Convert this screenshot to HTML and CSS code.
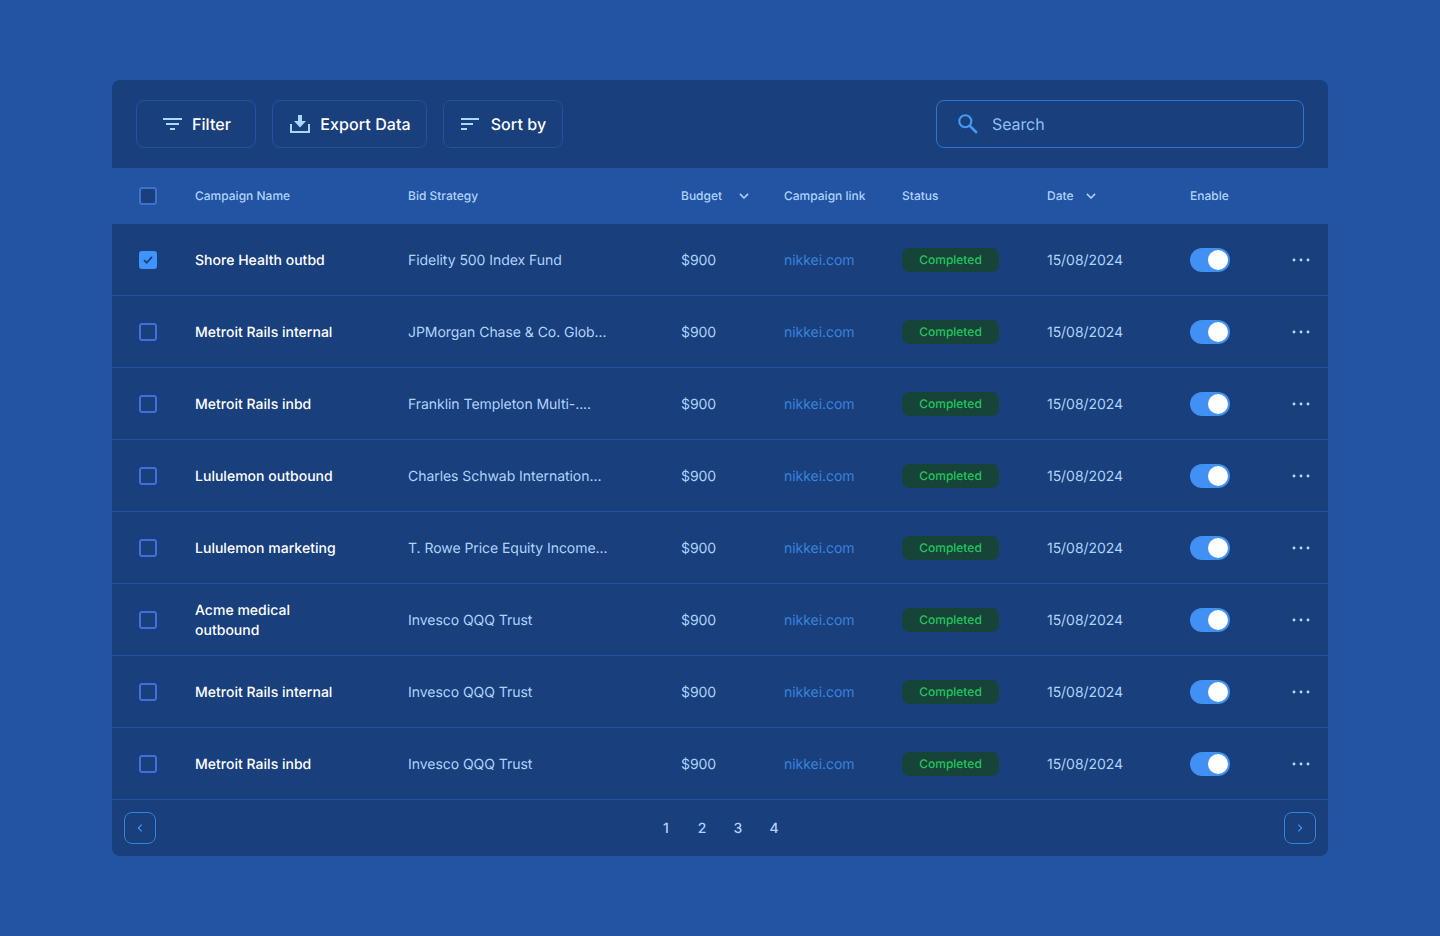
FILE: index.html
```html
<!DOCTYPE html>
<html lang="en">
<head>
<meta charset="utf-8">
<title>Campaigns</title>
<link rel="stylesheet" href="styles.css">
</head>
<body>
<svg class="sprite" width="0" height="0" aria-hidden="true">
  <symbol id="dots" viewBox="0 0 18 4"><circle cx="2" cy="2" r="1.45"/><circle cx="9" cy="2" r="1.45"/><circle cx="16" cy="2" r="1.45"/></symbol>
  <symbol id="down" viewBox="0 0 10 6"><path d="M.9.9 5 5 9.1.9" fill="none" stroke="currentColor" stroke-width="1.5"/></symbol>
</svg>
<main class="card">
  <div class="toolbar">
    <button class="btn btn-filter"><svg width="19" height="14" viewBox="0 0 19 14" fill="currentColor"><path d="M0 1h19v2H0zM3 6h13v2H3zM7 11h5v2H7z"/></svg>Filter</button>
    <button class="btn btn-export"><svg width="20" height="20" viewBox="0 0 20 20" fill="currentColor"><path d="M8 1h4v6h4l-6 6.500L4 7h4z"/><path d="M0 10h2v7h16v-7h2v9H0z"/></svg>Export Data</button>
    <button class="btn btn-sort"><svg width="18" height="14" viewBox="0 0 18 14" fill="currentColor"><path d="M0 1h18v2H0zM0 6h12v2H0zM0 11h6v2H0z"/></svg>Sort by</button>
    <label class="search"><svg width="20" height="20" viewBox="0 0 20 20" fill="none" stroke="currentColor" stroke-width="2.100"><circle cx="7.300" cy="7.300" r="6"/><path d="m11.600 11.600 7.300 7.300" stroke-width="2.600"/></svg><span>Search</span></label>
  </div>
  <div class="row head">
    <i class="check check-all"></i><span>Campaign Name</span><span>Bid Strategy</span>
    <span class="sort sort-budget">Budget<svg width="10" height="6"><use href="#down"/></svg></span>
    <span>Campaign link</span><span>Status</span>
    <span class="sort sort-date">Date<svg width="10" height="6"><use href="#down"/></svg></span><span>Enable</span>
  </div>
  <div class="row"><i class="check checked"><svg width="12" height="10" viewBox="0 0 12 10" fill="none" stroke="currentColor" stroke-width="1.800"><path d="m2 5.200 2.700 2.600 5.300-5.900"/></svg></i><b class="name">Shore Health outbd</b><span class="cell">Fidelity 500 Index Fund</span><span class="cell">$900</span><a class="link">nikkei.com</a><em class="pill">Completed</em><span class="cell">15/08/2024</span><i class="toggle"></i><svg class="more"><use href="#dots"/></svg></div>
  <div class="row"><i class="check"></i><b class="name">Metroit Rails internal</b><span class="cell">JPMorgan Chase &amp; Co. Glob...</span><span class="cell">$900</span><a class="link">nikkei.com</a><em class="pill">Completed</em><span class="cell">15/08/2024</span><i class="toggle"></i><svg class="more"><use href="#dots"/></svg></div>
  <div class="row"><i class="check"></i><b class="name">Metroit Rails inbd</b><span class="cell">Franklin Templeton Multi-....</span><span class="cell">$900</span><a class="link">nikkei.com</a><em class="pill">Completed</em><span class="cell">15/08/2024</span><i class="toggle"></i><svg class="more"><use href="#dots"/></svg></div>
  <div class="row"><i class="check"></i><b class="name">Lululemon outbound</b><span class="cell">Charles Schwab Internation...</span><span class="cell">$900</span><a class="link">nikkei.com</a><em class="pill">Completed</em><span class="cell">15/08/2024</span><i class="toggle"></i><svg class="more"><use href="#dots"/></svg></div>
  <div class="row"><i class="check"></i><b class="name">Lululemon marketing</b><span class="cell">T. Rowe Price Equity Income...</span><span class="cell">$900</span><a class="link">nikkei.com</a><em class="pill">Completed</em><span class="cell">15/08/2024</span><i class="toggle"></i><svg class="more"><use href="#dots"/></svg></div>
  <div class="row"><i class="check"></i><b class="name">Acme medical<br>outbound</b><span class="cell">Invesco QQQ Trust</span><span class="cell">$900</span><a class="link">nikkei.com</a><em class="pill">Completed</em><span class="cell">15/08/2024</span><i class="toggle"></i><svg class="more"><use href="#dots"/></svg></div>
  <div class="row"><i class="check"></i><b class="name">Metroit Rails internal</b><span class="cell">Invesco QQQ Trust</span><span class="cell">$900</span><a class="link">nikkei.com</a><em class="pill">Completed</em><span class="cell">15/08/2024</span><i class="toggle"></i><svg class="more"><use href="#dots"/></svg></div>
  <div class="row"><i class="check"></i><b class="name">Metroit Rails inbd</b><span class="cell">Invesco QQQ Trust</span><span class="cell">$900</span><a class="link">nikkei.com</a><em class="pill">Completed</em><span class="cell">15/08/2024</span><i class="toggle"></i><svg class="more"><use href="#dots"/></svg></div>
  <div class="footer">
    <button class="page-btn"><svg width="6" height="8" viewBox="0 0 6 8" fill="none" stroke="currentColor" stroke-width="1.200"><path d="M4.700.6 1.300 4l3.400 3.400"/></svg></button>
    <nav class="pages"><span>1</span><span>2</span><span>3</span><span>4</span></nav>
    <button class="page-btn"><svg width="6" height="8" viewBox="0 0 6 8" fill="none" stroke="currentColor" stroke-width="1.200"><path d="M1.300.6 4.700 4 1.300 7.400"/></svg></button>
  </div>
</main>
</body>
</html>
```
FILE: styles.css
```css
* { box-sizing: border-box; }
body {
  margin: 0;
  padding: 80px 112px;
  height: 936px;
  background: #2353a3;
  font-family: Inter, "Liberation Sans", sans-serif;
  text-rendering: geometricPrecision;
  color: #b0d3fb;
}
.sprite { position: absolute; }
svg { display: block; flex: none; }
.card {
  width: 1216px;
  height: 776px;
  border-radius: 8px;
  overflow: hidden;
  background: #193f7c;
}
.toolbar {
  height: 88px;
  padding: 0 24px;
  display: flex;
  align-items: center;
  gap: 16px;
}
.btn {
  height: 48px;
  padding: 0 0 0 2px;
  display: flex;
  align-items: center;
  justify-content: center;
  background: none;
  border: 1px solid #2353a0;
  border-radius: 8px;
  font: 500 16px/24px Inter, "Liberation Sans", sans-serif;
  text-rendering: geometricPrecision;
  letter-spacing: 0.1px;
  color: #fff;
}
.btn svg { color: #a9d8ff; }
.btn-filter { width: 120px; gap: 10px; }
.btn-export { width: 155px; gap: 10px; }
.btn-sort { width: 120px; padding-left: 1px; gap: 12px; }
.search {
  width: 368px;
  height: 48px;
  margin-left: auto;
  padding-left: 21px;
  display: flex;
  align-items: center;
  gap: 14px;
  border: 1px solid #2f74d0;
  border-radius: 8px;
  font-size: 16px;
  line-height: 24px;
  letter-spacing: -0.1px;
  color: #90bff5;
}
.search svg { color: #459cf5; }
.row {
  height: 72px;
  padding-left: 27px;
  display: grid;
  grid-template-columns: 56px 213px 273px 103px 118px 145px 143px 102px 20px;
  align-items: center;
  border-bottom: 1px solid #2353a3;
  font-size: 14px;
  line-height: 20px;
}
.head {
  height: 56px;
  background: #2353a3;
  font-size: 12px;
  font-weight: 500;
  line-height: 16px;
}
.sort { display: flex; align-items: center; }
.sort-budget { gap: 17px; }
.sort-date { gap: 12px; }
.check {
  width: 18px;
  height: 18px;
  border: 2px solid #416fdb;
  border-radius: 3px;
}
.check-all { background: #193f7c; border-color: #3b72cc; }
.checked {
  display: flex;
  align-items: center;
  justify-content: center;
  background: #3f94fb;
  border: 0;
  color: #193f7c;
}
.name, .cell, .link { padding-top: 2px; }
.cell, .link { letter-spacing: -0.05px; }
.name { font-weight: 500; letter-spacing: 0.02px; color: #fff; }
.link { color: #3a82dc; }
.pill {
  width: 97px;
  height: 24px;
  border-radius: 7px;
  background: #174438;
  color: #22c55e;
  font-size: 12px;
  font-style: normal;
  font-weight: 500;
  line-height: 24px;
  text-align: center;
}
.toggle {
  width: 40px;
  height: 24px;
  padding: 2px;
  border-radius: 12px;
  background: #4190f3;
  display: flex;
  justify-content: flex-end;
}
.toggle::after {
  content: "";
  width: 20px;
  height: 20px;
  border-radius: 50%;
  background: #fff;
}
.more { width: 18px; height: 4px; fill: #b5d9ff; }
.footer {
  height: 56px;
  padding: 0 12px;
  display: flex;
  align-items: center;
  justify-content: space-between;
}
.page-btn {
  width: 32px;
  height: 32px;
  padding: 0;
  display: flex;
  align-items: center;
  justify-content: center;
  background: none;
  border: 1px solid #3582dc;
  border-radius: 8px;
  color: #4197f0;
}
.pages { display: flex; padding-top: 2px; font-size: 14px; font-weight: 500; line-height: 20px; }
.pages span { width: 36px; text-align: center; }
```
